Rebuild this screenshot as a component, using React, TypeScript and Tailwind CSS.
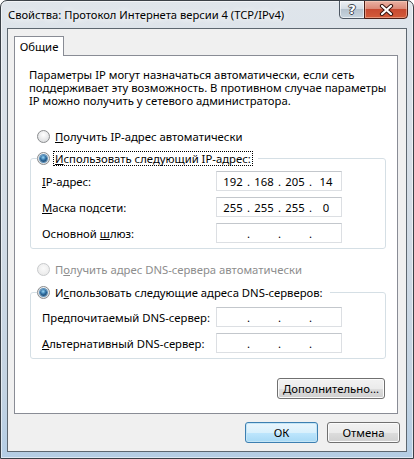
import type { ReactNode } from "react";

// Properties dialog: Internet Protocol Version 4 (Vista look)

const font = "font-['Noto_Sans','Liberation_Sans',sans-serif]";

function Radio({ checked, disabled }: { checked?: boolean; disabled?: boolean }) {
  return (
    <span
      className={
        disabled
          ? "flex h-[13px] w-[13px] shrink-0 items-center justify-center rounded-full border border-[#c8cacc] bg-[radial-gradient(circle_at_50%_40%,#fafafa,#e6e6e6)]"
          : "flex h-[13px] w-[13px] shrink-0 items-center justify-center rounded-full border border-[#8a8c8e] bg-[radial-gradient(circle_at_50%_35%,#ffffff,#d4d6d8)]"
      }
    >
      {checked && (
        <span className="h-[7px] w-[7px] rounded-full bg-[radial-gradient(circle_at_45%_35%,#9ad8f7_0%,#2f6fa3_45%,#10304e_100%)] shadow-[0_0_0_1px_#5a90bb]" />
      )}
    </span>
  );
}

function RadioRow({
  children,
  checked,
  disabled,
  focused,
}: {
  children: ReactNode;
  checked?: boolean;
  disabled?: boolean;
  focused?: boolean;
}) {
  return (
    <div className="flex h-[15px] items-center gap-[3px] whitespace-nowrap">
      <Radio checked={checked} disabled={disabled} />
      <span
        className={
          focused
            ? "border border-dotted border-black px-[1px] leading-[13px] text-black"
            : disabled
              ? "border border-transparent px-[1px] leading-[13px] text-[#8d8d8d]"
              : "border border-transparent px-[1px] leading-[13px] text-black"
        }
      >
        {children}
      </span>
    </div>
  );
}

function IpField({ parts = ["", "", "", ""] }: { parts?: string[] }) {
  return (
    <div className="flex h-[20px] w-[126px] items-center border border-[#dcdfe3] border-t-[#c3c7cc] bg-white pl-[2px]">
      {parts.map((p, i) => (
        <div key={i} className="flex items-center">
          {i > 0 && <span className="w-[3px] text-center">.</span>}
          <span className="w-[28px] text-center">{p}</span>
        </div>
      ))}
    </div>
  );
}

function FieldRow({ label, parts }: { label: ReactNode; parts?: string[] }) {
  return (
    <div className="flex items-center">
      <span className="w-[174px] whitespace-nowrap">{label}</span>
      <IpField parts={parts} />
    </div>
  );
}

function Button({ children, primary, className = "" }: { children: ReactNode; primary?: boolean; className?: string }) {
  return (
    <button
      className={
        (primary
          ? "border-[#3c7fb1] bg-[linear-gradient(180deg,#eaf6fd_0%,#d9f0fc_50%,#bee6fd_50%,#a7d9f5_100%)] shadow-[inset_0_0_0_1px_#c4e5f6] "
          : "border-[#707070] bg-[linear-gradient(180deg,#f2f2f2_0%,#ebebeb_50%,#dddddd_50%,#cfcfcf_100%)] shadow-[inset_0_0_0_1px_#fbfbfb] ") +
        "flex h-[21px] items-center justify-center rounded-[3px] border leading-[15px] text-black " +
        className
      }
    >
      {children}
    </button>
  );
}

export default function App() {
  return (
    <div
      className={`${font} relative flex h-[459px] w-[414px] flex-col overflow-hidden rounded-t-[7px] border border-[#3a4047] bg-[linear-gradient(180deg,#dfe5eb_0%,#d4dde6_45%,#c3d3e2_85%,#b4cde4_100%)] text-[11.3px] leading-[15px] text-black shadow-[inset_0_0_0_1px_rgba(255,255,255,0.55)]`}
    >
      {/* title bar */}
      <div className="flex h-[27px] shrink-0 items-start justify-between pl-[7px] pr-[5px]">
        <span className="mt-[6px] whitespace-nowrap text-[11.2px] leading-[16px] text-black [text-shadow:0_0_6px_#fff,0_0_10px_#fff]">
          Свойства: Протокол Интернета версии 4 (TCP/IPv4)
        </span>
        <div className="-mt-px flex">
          <div className="flex h-[19px] w-[26px] items-center justify-center rounded-bl-[4px] border border-[#4d5763] bg-[linear-gradient(180deg,#edf1f5_0%,#d4dde5_45%,#b5c2ce_50%,#c9d5df_100%)] shadow-[inset_0_0_0_1px_rgba(255,255,255,0.6)]">
            <span className="font-['DejaVu_Sans',sans-serif] text-[13px] font-bold leading-none text-white [text-shadow:-1px_0_#3e4751,1px_0_#3e4751,0_-1px_#3e4751,0_1px_#3e4751]">
              ?
            </span>
          </div>
          <div className="-ml-px flex h-[19px] w-[44px] items-center justify-center rounded-br-[4px] border border-[#4a1d16] bg-[linear-gradient(180deg,#eab2a4_0%,#dc8a78_45%,#c84a31_50%,#d35b3a_100%)] shadow-[inset_0_0_0_1px_rgba(255,220,200,0.45)]">
            <svg width="15" height="12" viewBox="0 0 15 12">
              <path d="M3 2 L12 10 M12 2 L3 10" stroke="#3a1610" strokeWidth="4.2" strokeLinecap="round" />
              <path d="M3 2 L12 10 M12 2 L3 10" stroke="#ffffff" strokeWidth="2.2" strokeLinecap="round" />
            </svg>
          </div>
        </div>
      </div>

      {/* client area */}
      <div className="mx-[6px] flex h-[424px] flex-col border border-[#5d6770] bg-[#f0f0f0]">
        <div className="ml-[6px] mt-[7px] flex">
          <div className="relative z-10 -mb-px flex h-[20px] w-[50px] items-center justify-center border border-b-0 border-[#898c95] bg-white">
            Общие
          </div>
        </div>

        <div className="ml-[6px] flex h-[359px] w-[384px] flex-col border border-[#898c95] bg-white">
          <p className="whitespace-nowrap pl-[14px] pt-[12px] leading-[13px]">
            Параметры IP могут назначаться автоматически, если сеть
            <br />
            поддерживает эту возможность. В противном случае параметры
            <br />
            IP можно получить у сетевого администратора.
          </p>

          <div className="ml-[22px] mt-[22px]">
            <RadioRow>
              <u>П</u>олучить IP-адрес автоматически
            </RadioRow>
          </div>

          <fieldset className="ml-[15px] mt-[7px] w-[356px] rounded-[3px] border border-[#d5dfe5] pb-[5px] pt-[5px]">
            <legend className="ml-[6px] pr-[5px]">
              <RadioRow checked focused>
                <u>И</u>спользовать следующий IP-адрес:
              </RadioRow>
            </legend>
            <div className="flex flex-col gap-[6px] pl-[11px]">
              <FieldRow label={<><u>I</u>P-адрес:</>} parts={["192", "168", "205", "14"]} />
              <FieldRow label={<><u>М</u>аска подсети:</>} parts={["255", "255", "255", "0"]} />
              <FieldRow label={<>Основной <u>ш</u>люз:</>} />
            </div>
          </fieldset>

          <div className="ml-[22px] mt-[13px]">
            <RadioRow disabled>
              П<u>о</u>лучить адрес DNS-сервера автоматически
            </RadioRow>
          </div>

          <fieldset className="ml-[15px] mt-[8px] w-[356px] rounded-[3px] border border-[#d5dfe5] pb-[5px] pt-[7px]">
            <legend className="ml-[6px] pr-[5px]">
              <RadioRow checked>
                И<u>с</u>пользовать следующие адреса DNS-серверов:
              </RadioRow>
            </legend>
            <div className="flex flex-col gap-[6px] pl-[11px]">
              <FieldRow label={<>Пре<u>д</u>почитаемый DNS-сервер:</>} />
              <FieldRow label={<><u>А</u>льтернативный DNS-сервер:</>} />
            </div>
          </fieldset>

          <div className="mr-[12px] mt-[19px] flex justify-end">
            <Button className="w-[108px]">
              <u>Д</u>ополнительно...
            </Button>
          </div>
        </div>

        <div className="mr-[6px] mt-[8px] flex justify-end gap-[9px]">
          <Button primary className="w-[73px]">
            ОК
          </Button>
          <Button className="w-[73px]">Отмена</Button>
        </div>
      </div>
    </div>
  );
}
